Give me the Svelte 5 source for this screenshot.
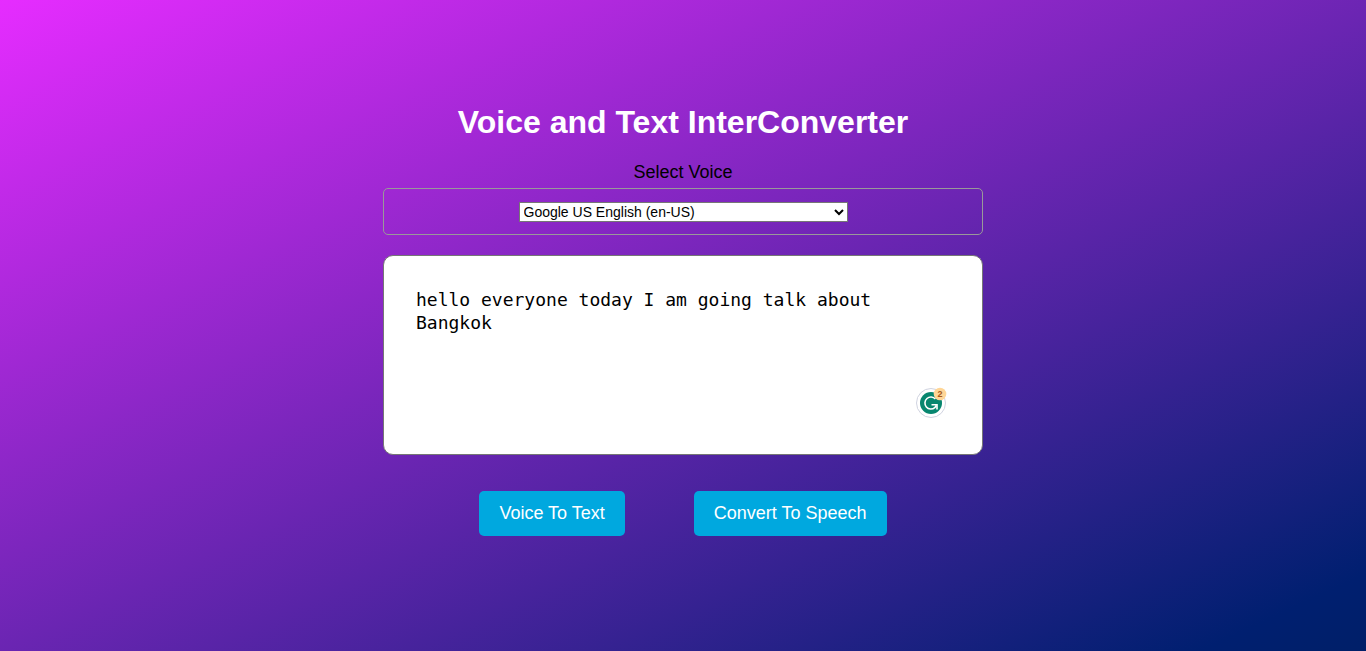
<script>
  let voice = $state('Google US English (en-US)');
  let text = $state('hello everyone today I am going talk about Bangkok');
</script>

<main>
  <div class="converter">
    <h1>Voice and Text InterConverter</h1>
    <label for="voice">Select Voice</label>
    <div class="voice-box">
      <select id="voice" bind:value={voice}>
        <option>Google US English (en-US)</option>
      </select>
    </div>
    <div class="editor">
      <textarea aria-label="Text" spellcheck="false" bind:value={text}></textarea>
      <svg class="checker" viewBox="0 0 32 32" aria-hidden="true">
        <circle cx="15" cy="17" r="14.5" fill="#fff" stroke="#d0d3e0" />
        <circle cx="15" cy="17" r="11" fill="#07866f" />
        <path d="M19.4 13A6 6 0 1 0 18.800 21.600L20.300 19.500" fill="none" stroke="#fff" stroke-width="1.6" />
        <path d="M15.500 18.800H21V23.500" fill="none" stroke="#fff" stroke-width="1.6" />
        <circle cx="24" cy="8" r="6.300" fill="#ffd696" />
        <text x="24" y="11" text-anchor="middle">2</text>
      </svg>
    </div>
    <div class="actions">
      <button type="button">Voice To Text</button>
      <button type="button">Convert To Speech</button>
    </div>
  </div>
</main>

<style>
  :global(body) {
    margin: 0;
  }
  main {
    box-sizing: border-box;
    min-height: 100vh;
    display: flex;
    align-items: center;
    justify-content: center;
    padding: 20px;
    font-family: "Liberation Sans", Arial, sans-serif;
    background: linear-gradient(155deg, #e62cff 0%, #001f70 94%, #001f68 100%);
  }
  .converter {
    width: 100%;
    max-width: 600px;
    display: flex;
    flex-direction: column;
    align-items: center;
    padding-bottom: 11px;
  }
  h1 {
    margin: 0 0 21px;
    color: #fff;
    font-size: 32px;
    line-height: 37px;
    text-align: center;
  }
  label {
    font-size: 18px;
    line-height: 21px;
    margin-bottom: 5px;
  }
  .voice-box {
    box-sizing: border-box;
    width: 100%;
    display: flex;
    justify-content: center;
    padding: 13px 13px 12px;
    border: 1px solid #999;
    border-radius: 5px;
    margin-bottom: 20px;
  }
  select {
    width: 329px;
    max-width: 100%;
    height: 20px;
    padding: 0;
    font: 14px "Liberation Sans", Arial, sans-serif;
    background: #fff;
    border: 1px solid #767676;
    border-radius: 0;
  }
  .editor {
    position: relative;
    width: 100%;
    margin-bottom: 36px;
  }
  textarea {
    display: block;
    box-sizing: border-box;
    width: 100%;
    height: 200px;
    padding: 32px;
    border: 1px solid #767676;
    border-radius: 10px;
    resize: none;
    outline: none;
    background: #fff;
    color: #000;
    font: 18px/23px Consolas, "DejaVu Sans Mono", monospace;
  }
  .checker {
    position: absolute;
    right: 35px;
    bottom: 37px;
    width: 32px;
    height: 32px;
  }
  .checker text {
    font: bold 9px "Liberation Sans", Arial, sans-serif;
    fill: #a85a1c;
  }
  .actions {
    display: flex;
    flex-wrap: wrap;
    justify-content: center;
    gap: 20px 69px;
  }
  button {
    height: 45px;
    padding: 0 20px;
    border: 0;
    border-radius: 5px;
    background: #00a8df;
    color: #fff;
    font: 18px "Liberation Sans", Arial, sans-serif;
  }
</style>
